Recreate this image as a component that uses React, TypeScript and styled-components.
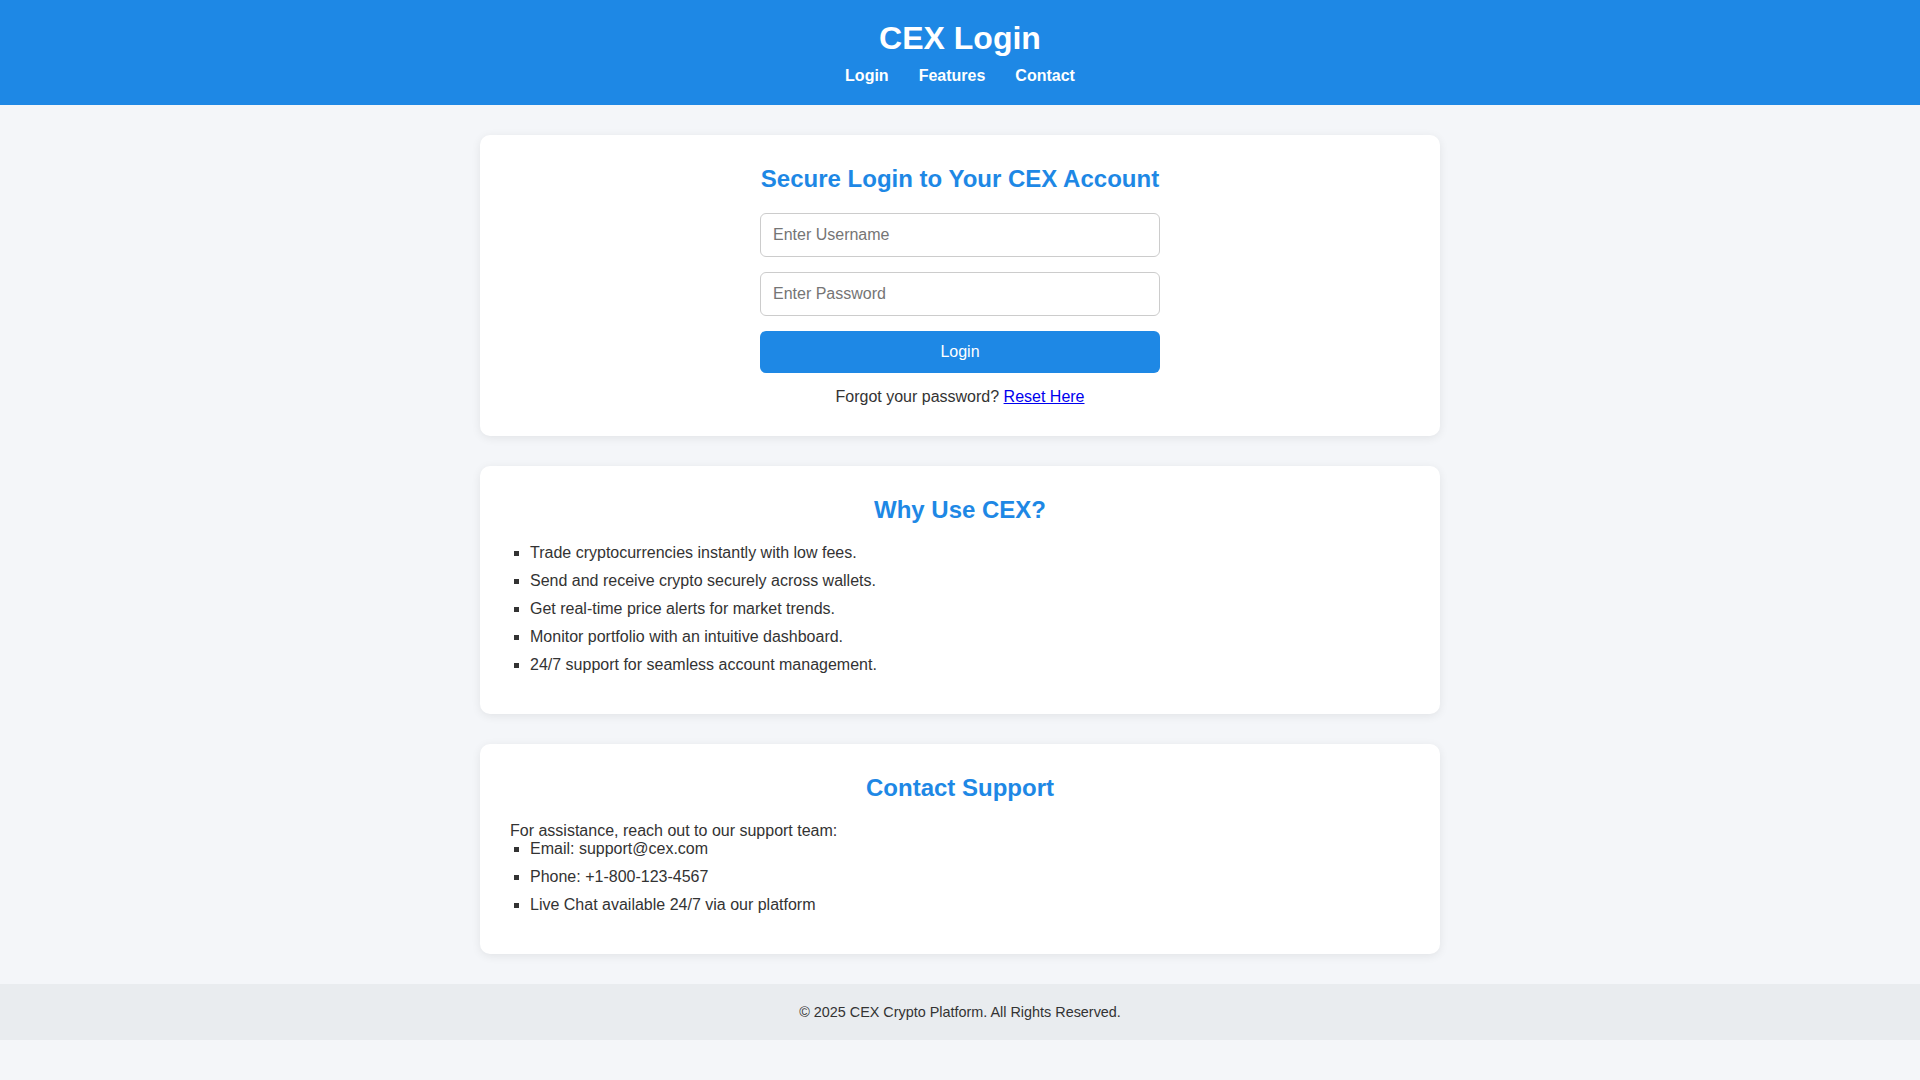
import { Component } from "react";
import styled, { createGlobalStyle } from "styled-components";

const features: string[] = [
    "Trade cryptocurrencies instantly with low fees.",
    "Send and receive crypto securely across wallets.",
    "Get real-time price alerts for market trends.",
    "Monitor portfolio with an intuitive dashboard.",
    "24/7 support for seamless account management.",
];

const contacts: string[] = [
    "Email: support@cex.com",
    "Phone: +1-800-123-4567",
    "Live Chat available 24/7 via our platform",
];

class App extends Component
{
    render() : JSX.Element
    {
        return (
            <>
                <GlobalStyle />
                <Header>
                    <Title>CEX Login</Title>
                    <Nav>
                        <NavLink href="#login">Login</NavLink>
                        <NavLink href="#features">Features</NavLink>
                        <NavLink href="#contact">Contact</NavLink>
                    </Nav>
                </Header>

                <Main>
                    <Card id="login">
                        <Heading>Secure Login to Your CEX Account</Heading>
                        <Form onSubmit={e => e.preventDefault()}>
                            <Input type="text" placeholder="Enter Username" />
                            <Input type="password" placeholder="Enter Password" />
                            <Button type="submit">Login</Button>
                        </Form>
                        <Forgot>
                            Forgot your password? <a href="#reset">Reset Here</a>
                        </Forgot>
                    </Card>

                    <Card id="features">
                        <Heading>Why Use CEX?</Heading>
                        <List>
                            {features.map(item => <li key={item}>{item}</li>)}
                        </List>
                    </Card>

                    <Card id="contact">
                        <Heading>Contact Support</Heading>
                        <Text>For assistance, reach out to our support team:</Text>
                        <List>
                            {contacts.map(item => <li key={item}>{item}</li>)}
                        </List>
                    </Card>
                </Main>

                <Footer>© 2025 CEX Crypto Platform. All Rights Reserved.</Footer>
            </>
        );
    }
}

const GlobalStyle = createGlobalStyle`
    body
    {
        margin: 0;
        background: #f4f6f9;
        color: #333;
        font-family: "Liberation Sans", Arial, sans-serif;
    }
`;

const Header = styled.header`
    background: #1e88e5;
    color: white;
    text-align: center;
    padding: 20px;
`;

const Title = styled.h1`
    margin: 0;
    font-size: 32px;
`;

const Nav = styled.nav`
    display: flex;
    justify-content: center;
    gap: 30px;
    margin-top: 10px;
`;

const NavLink = styled.a`
    color: white;
    font-weight: bold;
    text-decoration: none;
`;

const Main = styled.main`
    display: flex;
    flex-direction: column;
    align-items: center;
    gap: 30px;
    padding: 30px 20px;
`;

const Card = styled.section`
    box-sizing: border-box;
    width: 100%;
    max-width: 960px;
    padding: 30px;
    background: white;
    border-radius: 10px;
    box-shadow: 0 2px 10px rgba(0, 0, 0, 0.08);
`;

const Heading = styled.h2`
    margin: 0 0 20px 0;
    text-align: center;
    color: #1e88e5;
    font-size: 24px;
`;

const Form = styled.form`
    display: flex;
    flex-direction: column;
    gap: 15px;
    width: 400px;
    margin: 0 auto;
`;

const Input = styled.input`
    padding: 12px;
    border: 1px solid #ccc;
    border-radius: 6px;
    font-family: inherit;
    font-size: 16px;
    color: #333;

    &::placeholder
    {
        color: #757575;
    }
`;

const Button = styled.button`
    padding: 12px;
    border: none;
    border-radius: 6px;
    background: #1e88e5;
    color: white;
    font-family: inherit;
    font-size: 16px;
    cursor: pointer;
`;

const Forgot = styled.p`
    margin: 15px 0 0 0;
    text-align: center;

    a
    {
        color: #0000ee;
    }
`;

const Text = styled.p`
    margin: 0;
`;

const List = styled.ul`
    margin: 0;
    padding-left: 20px;
    list-style: square;

    li
    {
        margin-bottom: 10px;
    }
`;

const Footer = styled.footer`
    background: #e9ecef;
    text-align: center;
    font-size: 14.4px;
    padding: 20px;
`;

export default App;
